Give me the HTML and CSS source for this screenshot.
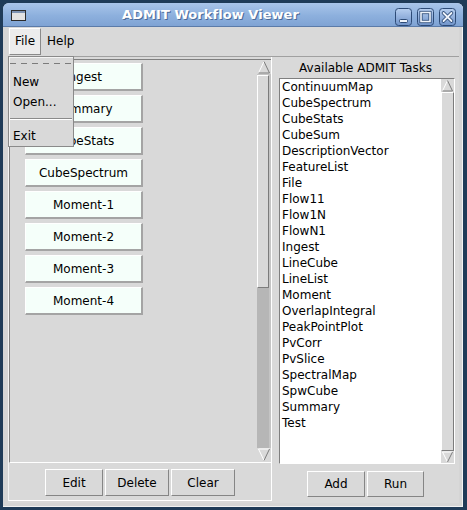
FILE: index.html
```html
<!DOCTYPE html>
<html>
<head>
<meta charset="utf-8">
<title>ADMIT Workflow Viewer</title>
<link rel="stylesheet" href="styles.css">
</head>
<body>
<svg class="defs" width="0" height="0" aria-hidden="true">
  <defs>
    <linearGradient id="wbg" x1="0" y1="0" x2="0" y2="1">
      <stop offset="0" stop-color="#b7cff0"/>
      <stop offset="1" stop-color="#6f93c9"/>
    </linearGradient>
  </defs>
</svg>
<div class="screen">
  <div class="window">
    <div class="titlebar">
      <svg class="appicon" width="15" height="11" viewBox="0 0 15 11">
        <rect x="0.5" y="0.5" width="14" height="10" fill="#e2e2e2" stroke="#2c2c2c"/>
        <rect x="1" y="1" width="13" height="2" fill="#7d93b3"/>
      </svg>
      <div class="title">ADMIT Workflow Viewer</div>
      <div class="wbtns">
        <svg width="17" height="18" viewBox="0 0 17 18">
          <rect x="0.5" y="0.5" width="16" height="17" rx="3" fill="url(#wbg)" stroke="#2d4b77"/>
          <rect x="4.5" y="11.5" width="8" height="3" rx="1" fill="#eef3fa" stroke="#2d4b77"/>
        </svg>
        <svg width="17" height="18" viewBox="0 0 17 18">
          <rect x="0.5" y="0.5" width="16" height="17" rx="3" fill="url(#wbg)" stroke="#2d4b77"/>
          <rect x="4" y="4.5" width="9" height="9" fill="none" stroke="#2d4b77" stroke-width="3.2"/>
          <rect x="4" y="4.5" width="9" height="9" fill="none" stroke="#eef3fa" stroke-width="1.6"/>
        </svg>
        <svg width="17" height="18" viewBox="0 0 17 18">
          <rect x="0.5" y="0.5" width="16" height="17" rx="3" fill="url(#wbg)" stroke="#2d4b77"/>
          <path d="M4.5 5 L12.5 13 M12.5 5 L4.5 13" stroke="#2d4b77" stroke-width="3.6" stroke-linecap="round"/>
          <path d="M4.5 5 L12.5 13 M12.5 5 L4.5 13" stroke="#eef3fa" stroke-width="1.8" stroke-linecap="round"/>
        </svg>
      </div>
    </div>
    <div class="client">
      <div class="menubar">
        <div class="mitem active">File</div>
        <div class="mitem">Help</div>
      </div>
      <div class="main">
        <div class="left">
          <div class="canvasrow">
            <div class="canvas">
              <div class="node">Ingest</div>
              <div class="node">Summary</div>
              <div class="node">CubeStats</div>
              <div class="node">CubeSpectrum</div>
              <div class="node">Moment-1</div>
              <div class="node">Moment-2</div>
              <div class="node">Moment-3</div>
              <div class="node">Moment-4</div>
            </div>
            <div class="vscroll lscroll">
              <svg class="arrow" width="14" height="14" viewBox="0 0 14 14">
                <polygon points="1.5,13 7,1.5 12.5,13" fill="#d9d9d9"/>
                <path d="M1.5 13 L7 1.5" stroke="#ffffff" stroke-width="1"/>
                <path d="M7 1.5 L12.5 13 L1.5 13" stroke="#7c7c7c" stroke-width="1" fill="none"/>
              </svg>
              <div class="slider lslider"></div>
              <div class="trough"></div>
              <svg class="arrow" width="14" height="14" viewBox="0 0 14 14">
                <polygon points="1.5,1 7,12.5 12.5,1" fill="#d9d9d9"/>
                <path d="M1.5 1 L12.5 1 M1.5 1 L7 12.5" stroke="#ffffff" stroke-width="1" fill="none"/>
                <path d="M7 12.5 L12.5 1" stroke="#7c7c7c" stroke-width="1"/>
              </svg>
            </div>
          </div>
          <div class="btnrow lbtns">
            <div class="btn w58">Edit</div>
            <div class="btn w64">Delete</div>
            <div class="btn w64">Clear</div>
          </div>
        </div>
        <div class="right">
          <div class="label">Available ADMIT Tasks</div>
          <div class="listbox">
            <div class="list">
              <div>ContinuumMap</div>
              <div>CubeSpectrum</div>
              <div>CubeStats</div>
              <div>CubeSum</div>
              <div>DescriptionVector</div>
              <div>FeatureList</div>
              <div>File</div>
              <div>Flow11</div>
              <div>Flow1N</div>
              <div>FlowN1</div>
              <div>Ingest</div>
              <div>LineCube</div>
              <div>LineList</div>
              <div>Moment</div>
              <div>OverlapIntegral</div>
              <div>PeakPointPlot</div>
              <div>PvCorr</div>
              <div>PvSlice</div>
              <div>SpectralMap</div>
              <div>SpwCube</div>
              <div>Summary</div>
              <div>Test</div>
            </div>
            <div class="vscroll rscroll">
              <svg class="arrow" width="13" height="13" viewBox="0 0 13 13">
                <polygon points="1.5,12 6.5,1.5 11.5,12" fill="#d9d9d9"/>
                <path d="M1.5 12 L6.5 1.5" stroke="#ffffff" stroke-width="1"/>
                <path d="M6.5 1.5 L11.5 12 L1.5 12" stroke="#7c7c7c" stroke-width="1" fill="none"/>
              </svg>
              <div class="slider rslider"></div>
              <svg class="arrow" width="13" height="12" viewBox="0 0 13 12">
                <polygon points="1.5,1 6.5,11 11.5,1" fill="#d9d9d9"/>
                <path d="M1.5 1 L11.5 1 M1.5 1 L6.5 11" stroke="#ffffff" stroke-width="1" fill="none"/>
                <path d="M6.5 11 L11.5 1" stroke="#7c7c7c" stroke-width="1"/>
              </svg>
            </div>
          </div>
          <div class="btnrow rbtns">
            <div class="btn w58">Add</div>
            <div class="btn w57">Run</div>
          </div>
        </div>
      </div>
    </div>
  </div>
  <div class="dropdown">
    <div class="tear"></div>
    <div class="ditem">New</div>
    <div class="ditem">Open...</div>
    <div class="sep"></div>
    <div class="ditem">Exit</div>
  </div>
</div>
</body>
</html>
```
FILE: styles.css
```css
* { box-sizing: border-box; }
html, body { margin: 0; padding: 0; }
body {
  background: #1f3b58;
  font-family: "DejaVu Sans", "Liberation Sans", sans-serif;
  font-size: 12px;
  color: #000;
}
.defs { position: absolute; width: 0; height: 0; }
.screen {
  position: relative;
  width: 467px;
  height: 510px;
  overflow: hidden;
  background: #1f3b58;
}
.window {
  margin: 3px 0 0 3px;
  width: 460px;
  height: 504px;
  background: #d5d5d5;
  border-radius: 6px 6px 0 0;
  display: flex;
  flex-direction: column;
  overflow: hidden;
  box-shadow: inset -1px -1px 0 #f2f2f2;
}
.titlebar {
  height: 24px;
  flex: none;
  display: flex;
  align-items: center;
  padding: 0 7px 0 8px;
  background: linear-gradient(#a9c5ea, #8db0dd 55%, #7fa3d4);
  border-bottom: 1px solid #5b7ba9;
}
.appicon { display: block; margin-top: 2px; }
.title {
  flex: 1;
  text-align: center;
  color: #fff;
  font-weight: bold;
  font-size: 13px;
  text-shadow: 1px 1px 0 #4a6a98;
  letter-spacing: 0.05px;
}
.wbtns { display: flex; gap: 5px; margin-top: 4px; }
.wbtns svg { display: block; }
.client {
  margin: 0 4px 4px 5px;
  flex: 1;
  background: #d9d9d9;
  display: flex;
  flex-direction: column;
}
.menubar {
  height: 30px;
  flex: none;
  display: flex;
  padding: 1px 0 0 1px;
  border-bottom: 1px solid #a0a0a0;
}
.mitem {
  height: 27px;
  line-height: 25px;
  padding: 0 5px;
  border: 1px solid transparent;
}
.mitem.active {
  background: #ececec;
  border-color: #ffffff #8a8a8a #8a8a8a #ffffff;
}
.main {
  flex: 1;
  display: flex;
}
.left {
  width: 264px;
  height: 444px;
  padding-top: 2px;
  border-left: 1px solid #f4f4f4;
  border-right: 1px solid #ffffff;
  border-bottom: 1px solid #ffffff;
  display: flex;
  flex-direction: column;
}
.canvasrow {
  height: 404px;
  display: flex;
  border-top: 1px solid #7f7f7f;
  border-left: 1px solid #7f7f7f;
  border-bottom: 1px solid #ffffff;
}
.canvas {
  flex: 1;
  padding: 3px 0 0 15px;
  display: flex;
  flex-direction: column;
  align-items: flex-start;
  gap: 4px;
}
.node {
  width: 118px;
  height: 28px;
  background: #f5fffa;
  border-style: solid;
  border-width: 1px 2px 2px 1px;
  border-color: #ffffff #a4a4a4 #a4a4a4 #ffffff;
  display: flex;
  align-items: center;
  justify-content: center;
}
.vscroll {
  display: flex;
  flex-direction: column;
  background: #c4c4c4;
}
.lscroll { width: 14px; }
.arrow { display: block; flex: none; background: #d9d9d9; }
.slider {
  background: #d9d9d9;
  border-style: solid;
  border-width: 1px;
  border-color: #ffffff #7c7c7c #7c7c7c #ffffff;
}
.lslider { height: 213px; margin-top: 1px; width: 12px; }
.trough { flex: 1; background: #b6b6b6; width: 12px; }
.btnrow {
  display: flex;
  justify-content: center;
  gap: 2px;
}
.lbtns { padding-top: 6px; }
.btn {
  height: 27px;
  background: #d9d9d9;
  border: 1px solid;
  border-color: #ffffff #858585 #858585 #ffffff;
  display: flex;
  align-items: center;
  justify-content: center;
}
.w58 { width: 58px; }
.w57 { width: 57px; }
.w64 { width: 64px; }
.right {
  flex: 1;
  display: flex;
  flex-direction: column;
}
.label {
  margin-top: 3px;
  line-height: 16px;
  text-align: center;
}
.listbox {
  margin: 2px 0 0 7px;
  width: 176px;
  height: 386px;
  display: flex;
  border-style: solid;
  border-width: 1px;
  border-color: #7f7f7f #ffffff #ffffff #7f7f7f;
}
.list {
  width: 161px;
  background: #ffffff;
  padding-left: 2px;
  line-height: 16px;
  overflow: hidden;
}
.rscroll { width: 13px; background: #d9d9d9; }
.rslider { flex: 1; width: 13px; }
.rbtns { margin-top: 7px; }
.rbtns .btn { height: 26px; }
.dropdown {
  position: absolute;
  left: 8px;
  top: 56px;
  width: 66px;
  height: 91px;
  background: #d9d9d9;
  border: 1px solid #8a8a8a;
  box-shadow: inset 1px 1px 0 #f4f4f4;
}
.tear {
  height: 15px;
  padding-top: 6px;
}
.tear::before {
  content: "";
  display: block;
  margin: 0 1px;
  height: 1px;
  background: repeating-linear-gradient(to right, #7b7b7b 0 6px, transparent 6px 11px);
}
.ditem {
  height: 20px;
  line-height: 20px;
  padding-left: 4px;
}
.sep {
  margin: 6px 1px 6px 1px;
  height: 2px;
  border-top: 1px solid #8a8a8a;
  border-bottom: 1px solid #ffffff;
}
```
